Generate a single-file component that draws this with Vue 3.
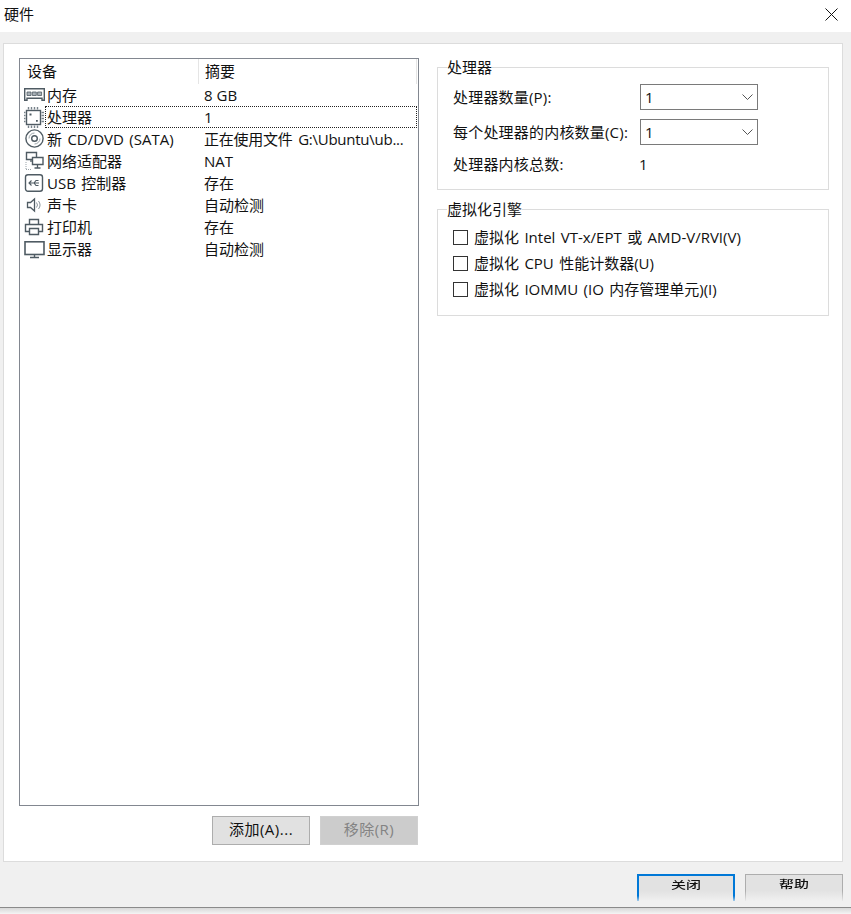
<script setup>
const devices = [
  { id: 'mem', name: '内存', summary: '8 GB' },
  { id: 'cpu', name: '处理器', summary: '1', focus: true },
  { id: 'cd', name: '新 CD/DVD (SATA)', summary: '正在使用文件 G:\\Ubuntu\\ub...', tight: true },
  { id: 'net', name: '网络适配器', summary: 'NAT' },
  { id: 'usb', name: 'USB 控制器', summary: '存在' },
  { id: 'snd', name: '声卡', summary: '自动检测' },
  { id: 'prn', name: '打印机', summary: '存在' },
  { id: 'dsp', name: '显示器', summary: '自动检测' },
]
const checks = [
  '虚拟化 Intel VT-x/EPT 或 AMD-V/RVI(V)',
  '虚拟化 CPU 性能计数器(U)',
  '虚拟化 IOMMU (IO 内存管理单元)(I)',
]
</script>

<template>
  <div class="win">
    <header class="title">
      <span>硬件</span>
      <svg class="close" width="13" height="13" viewBox="0 0 13 13"><path d="M.5.5l12 12M12.5.5l-12 12" stroke="#111" fill="none" /></svg>
    </header>
    <main class="gray">
      <div class="panel">
        <section class="left">
          <div class="list">
            <div class="head">
              <div class="hc hc1">设备</div>
              <div class="hc hc2">摘要</div>
            </div>
            <div v-for="d in devices" :key="d.id" class="row">
              <div class="ico">
                <svg width="22" height="22" viewBox="0 0 22 22" fill="none" stroke="#4f5b63" stroke-width="1">
                  <template v-if="d.id === 'mem'">
                    <path d="M.7 4.700h19.600v11.600h-2.300v-2H3v2H.7z" stroke-width="1.400" />
                    <path d="M3 8h4v3.500H3zM8.300 8h4v3.500h-4zM13.600 8h4v3.500h-4z" fill="#a9b1b7" stroke="#4f5b63" stroke-width=".8" />
                  </template>
                  <template v-else-if="d.id === 'cpu'">
                    <g transform="translate(-2 0)">
                      <rect x="4.500" y="4.500" width="14" height="14" stroke-width="1.400" />
                      <path d="M6.500 1v2.500M9.500 1v2.500M12.500 1v2.500M15.500 1v2.500M6.500 19.500V22M9.500 19.500V22M12.500 19.500V22M15.500 19.500V22M1 6.500h2.500M1 9.500h2.500M1 12.500h2.500M1 15.500h2.500M19.500 6.500H22M19.500 9.500H22M19.500 12.500H22M19.500 15.500H22" stroke="#77828a" stroke-width="1.400" />
                      <path d="M7.500 7.500h2v2h-2zM14 14h1.800v1.800H14z" fill="#4f5b63" stroke="none" />
                    </g>
                  </template>
                  <template v-else-if="d.id === 'cd'">
                    <circle cx="10.500" cy="10.500" r="8.600" stroke-width="1.400" />
                    <circle cx="10.500" cy="10.500" r="2.800" stroke-width="1.400" />
                    <path d="M5 10.500A5.500 5.500 0 0 1 10.500 5M16 10.500A5.500 5.500 0 0 1 10.500 16" stroke="#9aa3a9" />
                  </template>
                  <template v-else-if="d.id === 'net'">
                    <path d="M2.500 2.500h10v7h-10z" stroke-width="1.400" />
                    <path d="M8.500 7.500H19v7H8.500z" fill="#fff" stroke-width="1.400" />
                    <path d="M13.500 14.500v3M10.500 18h6M7 10v2" stroke-width="1.300" />
                    <path d="M2 19.500h6M2 12v7" stroke="#9aa3a9" stroke-dasharray="1 1" />
                  </template>
                  <template v-else-if="d.id === 'usb'">
                    <rect x="1.500" y="2.800" width="17" height="16.400" rx="2.500" stroke-width="1.400" />
                    <path d="M5 11h10M7.500 8.500L5 11l2.500 2.500M10 11l2-2.500h2.500M10 11l2 2.500h2.500" stroke-width="1.100" />
                  </template>
                  <template v-else-if="d.id === 'snd'">
                    <path d="M3.500 8.500h3l4-3.500v12l-4-3.500h-3z" stroke-width="1.300" />
                    <path d="M12.500 8.500a4 4 0 0 1 0 5M14.500 7a6.500 6.500 0 0 1 0 8" stroke="#8b959c" />
                  </template>
                  <template v-else-if="d.id === 'prn'">
                    <path d="M5.500 8V3.500h9V8" stroke-width="1.400" />
                    <path d="M5 15.500H1.500v-7h17v7H15" stroke-width="1.400" />
                    <path d="M5.500 12.500h9v6h-9z" stroke-width="1.400" />
                  </template>
                  <template v-else>
                    <rect x="1" y="3.800" width="19" height="12.700" stroke-width="1.600" />
                    <path d="M10.500 17v2M6 19.500h9" stroke-width="1.400" />
                  </template>
                </svg>
              </div>
              <div class="cells" :class="{ focus: d.focus }">
                <div class="c1">{{ d.name }}</div>
                <div class="c2" :class="{ tight: d.tight }">{{ d.summary }}</div>
              </div>
            </div>
          </div>
          <div class="actions">
            <button class="btn"><span>添加(A)...</span></button>
            <button class="btn off"><span>移除(R)</span></button>
          </div>
        </section>
        <section class="right">
          <fieldset class="group g1">
            <legend>处理器</legend>
            <div class="field">
              <label>处理器数量(P):</label>
              <div class="combo"><span>1</span><svg width="11" height="6" viewBox="0 0 11 6"><path d="M.5.5l5 5 5-5" fill="none" stroke="#555" /></svg></div>
            </div>
            <div class="field">
              <label>每个处理器的内核数量(C):</label>
              <div class="combo"><span>1</span><svg width="11" height="6" viewBox="0 0 11 6"><path d="M.5.5l5 5 5-5" fill="none" stroke="#555" /></svg></div>
            </div>
            <div class="field total">
              <label>处理器内核总数:</label>
              <span>1</span>
            </div>
          </fieldset>
          <fieldset class="group g2">
            <legend>虚拟化引擎</legend>
            <div v-for="c in checks" :key="c" class="check">
              <i class="box"></i><span>{{ c }}</span>
            </div>
          </fieldset>
        </section>
      </div>
      <footer class="foot">
        <div class="ghost primary"><span>关闭</span></div>
        <div class="ghost"><span>帮助</span></div>
      </footer>
    </main>
    <div class="shadow"></div>
  </div>
</template>

<style>
html, body { margin: 0; background: #fff; }
</style>

<style scoped>
.win {
  width: 851px;
  height: 914px;
  overflow: hidden;
  display: flex;
  flex-direction: column;
  font: 15px/20px "Open Sans", "Noto Sans CJK SC", sans-serif;
  color: #111;
}
.title {
  height: 32px;
  flex: none;
  display: flex;
  align-items: center;
  justify-content: space-between;
  padding: 0 13px 5px 4px;
  box-sizing: border-box;
  background: #fff;
}
.close { display: block; margin-top: 2px; }
.gray {
  height: 876px;
  flex: none;
  background: #f0f0f0;
  padding: 11px 8px 0 3px;
  box-sizing: border-box;
  border-bottom: 1px solid #8a8a8a;
}
.shadow {
  flex: 1;
  background: linear-gradient(#d8d8d8, #f4f4f4);
}
.panel {
  height: 819px;
  box-sizing: border-box;
  background: #fff;
  border: 1px solid #dcdcdc;
  padding: 14px 12px 0 15px;
  display: flex;
  gap: 18px;
}
.left { width: 400px; flex: none; display: flex; flex-direction: column; }
.list {
  height: 748px;
  box-sizing: border-box;
  border: 1px solid #828790;
}
.head { height: 25px; display: flex; }
.hc { padding: 2px 0 0 7px; box-sizing: border-box; height: 25px; border-right: 1px solid #e5e5e5; }
.hc1 { width: 179px; }
.hc2 { width: 218px; padding-left: 6px; }
.row { height: 22px; display: flex; }
.ico { width: 25px; flex: none; padding-left: 4px; box-sizing: border-box; }
.ico svg { display: block; }
.cells {
  flex: 1;
  display: flex;
  height: 22px;
  line-height: 20px;
  padding: 1px 0 1px 2px;
  box-sizing: border-box;
  margin-right: 1px;
  white-space: nowrap;
}
.cells.focus { outline: 1px dotted #222; outline-offset: -1px; }
.c1 { width: 157px; flex: none; word-spacing: 1.5px; }
.c2 { flex: 1; }
.c2.tight { word-spacing: 2px; letter-spacing: -.25px; }
.actions { display: flex; justify-content: flex-end; gap: 10px; padding: 10px 1px 0 0; }
.btn {
  width: 98px;
  height: 29px;
  padding: 0 0 3px;
  font: inherit;
  letter-spacing: .5px;
  color: #111;
  background: #e1e1e1;
  border: 1px solid #adadad;
}
.btn.off { background: #cccccc; border-color: #d0d0d0; color: #838383; }
.right { width: 392px; flex: none; }
.group {
  margin: 0;
  padding: 0;
  border: 1px solid #dcdcdc;
  min-width: 0;
  box-sizing: border-box;
}
.group legend { padding: 0; line-height: 18px; }
.g1 { height: 132px; padding: 8px 0 0 15px; }
.g1 legend { margin-left: -6px; }
.g2 { height: 116px; margin-top: 10px; padding: 6px 0 0 15px; }
.g2 legend { margin-left: -6px; }
.field { display: flex; align-items: center; height: 26px; margin-bottom: 9px; }
.field label { width: 186px; flex: none; letter-spacing: .2px; }
.combo {
  width: 118px;
  height: 26px;
  margin-left: 1px;
  box-sizing: border-box;
  border: 1px solid #7a7a7a;
  padding: 0 4px;
  display: flex;
  align-items: center;
  justify-content: space-between;
}
.total { margin-top: -3px; }
.check { height: 26px; display: flex; align-items: center; gap: 6px; white-space: nowrap; word-spacing: 1.5px; }
.box { width: 15px; height: 15px; box-sizing: border-box; border: 1px solid #333; background: #fff; flex: none; }
.foot { display: flex; justify-content: flex-end; gap: 10px; padding: 12px 0 0; }
.ghost {
  width: 98px;
  height: 27px;
  box-sizing: border-box;
  border: 1px solid transparent;
  border-bottom: 0;
  border-image: linear-gradient(#adadad 60%, rgba(173, 173, 173, 0)) 1;
  background: linear-gradient(#e2e2e2 60%, #f0f0f0);
  display: flex;
  justify-content: center;
  overflow: hidden;
}
.ghost span { filter: blur(.7px); transform: translateY(-1px) scaleY(.7); height: 20px; font-weight: 500; }
.primary {
  border-width: 2px 2px 0;
  border-image: linear-gradient(#0078d7 75%, rgba(0, 120, 215, 0)) 2;
}
</style>
